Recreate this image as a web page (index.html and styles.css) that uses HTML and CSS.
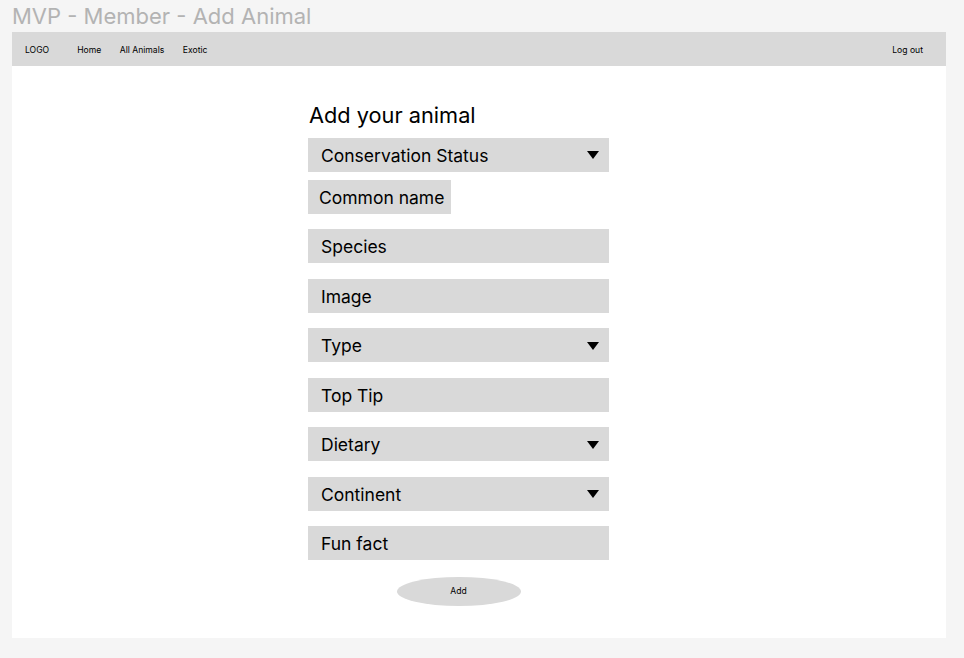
FILE: index.html
```html
<!DOCTYPE html>
<html lang="en">
<head>
<meta charset="utf-8">
<title>MVP - Member - Add Animal</title>
<link rel="stylesheet" href="styles.css">
</head>
<body>
<div class="page-label">MVP - Member - Add Animal</div>
<div class="frame">
  <nav class="nav">
    <span class="logo">LOGO</span>
    <a class="nav-link home">Home</a>
    <a class="nav-link">All Animals</a>
    <a class="nav-link">Exotic</a>
    <a class="nav-link logout">Log out</a>
  </nav>
  <main class="form">
    <h1 class="form-title">Add your animal</h1>
    <div class="field select first">Conservation Status<svg class="caret" width="12" height="8" viewBox="0 0 12 8"><polygon points="0,0 12,0 6,8" fill="#000"/></svg></div>
    <div class="field small">Common name</div>
    <div class="field after-small">Species</div>
    <div class="field">Image</div>
    <div class="field select">Type<svg class="caret" width="12" height="8" viewBox="0 0 12 8"><polygon points="0,0 12,0 6,8" fill="#000"/></svg></div>
    <div class="field">Top Tip</div>
    <div class="field select">Dietary<svg class="caret" width="12" height="8" viewBox="0 0 12 8"><polygon points="0,0 12,0 6,8" fill="#000"/></svg></div>
    <div class="field select">Continent<svg class="caret" width="12" height="8" viewBox="0 0 12 8"><polygon points="0,0 12,0 6,8" fill="#000"/></svg></div>
    <div class="field">Fun fact</div>
    <button class="add-btn">Add</button>
  </main>
</div>
</body>
</html>
```
FILE: styles.css
```css
html, body {
  margin: 0;
  padding: 0;
}
body {
  background: #f5f5f5;
  font-family: Inter, "Noto Sans", sans-serif;
  color: #000;
  width: 964px;
  height: 658px;
  overflow: hidden;
}
.page-label {
  height: 32px;
  padding-left: 12px;
  font-size: 22px;
  line-height: 32px;
  color: #b3b3b3;
  box-sizing: border-box;
}
.frame {
  width: 934px;
  height: 606px;
  margin-left: 12px;
  background: #fff;
}
.nav {
  box-sizing: border-box;
  height: 34px;
  background: #d9d9d9;
  display: flex;
  align-items: center;
  padding: 2px 23px 0 13px;
  font-size: 8.6px;
  color: #000;
}
.logo {
  margin-right: 28px;
}
.nav-link {
  margin-right: 18.5px;
}
.nav-link.logout {
  margin-left: auto;
  margin-right: 0;
}
.form {
  margin-left: 296px;
  width: 301px;
  display: flex;
  flex-direction: column;
  align-items: flex-start;
}
.form-title {
  margin: 35px 0 7.5px 1px;
  font-size: 21.75px;
  font-weight: 400;
  line-height: 29px;
}
.field {
  box-sizing: border-box;
  width: 301px;
  height: 34px;
  background: #d9d9d9;
  display: flex;
  align-items: center;
  justify-content: space-between;
  padding: 1px 10px 0 13px;
  font-size: 17.5px;
  margin-top: 15.5px;
}
.field.first {
  margin-top: 0;
}
.field.small {
  width: 143px;
  margin-top: 8.5px;
  padding: 1px 0 0 11px;
}
.field.after-small {
  margin-top: 15px;
}
.caret {
  display: block;
}
.add-btn {
  align-self: center;
  margin-top: 16.5px;
  width: 124px;
  height: 29px;
  border: none;
  border-radius: 50%;
  background: #d9d9d9;
  font-family: Inter, "Noto Sans", sans-serif;
  font-size: 8.6px;
  color: #000;
  padding: 0;
}
```
